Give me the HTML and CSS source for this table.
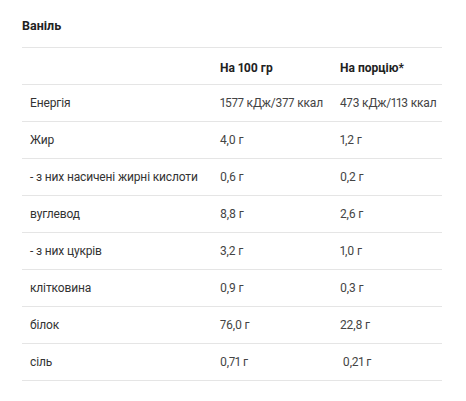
FILE: index.html
```html
<!DOCTYPE html>
<html lang="uk">
<head>
<meta charset="utf-8">
<link rel="stylesheet" href="styles.css">
</head>
<body>
<div class="panel">
  <h3 class="title">Ваніль</h3>
  <table class="nutri">
    <colgroup><col class="c1"><col class="c2"><col class="c3"></colgroup>
    <thead>
      <tr><th></th><th>На 100 гр</th><th>На порцію*</th></tr>
    </thead>
    <tbody>
      <tr><td>Енергія</td><td>1577 кДж/377 ккал</td><td>473 кДж/113 ккал</td></tr>
      <tr><td>Жир</td><td>4,0 г</td><td>1,2 г</td></tr>
      <tr><td>- з них насичені жирні кислоти</td><td>0,6 г</td><td>0,2 г</td></tr>
      <tr><td>вуглевод</td><td>8,8 г</td><td>2,6 г</td></tr>
      <tr><td>- з них цукрів</td><td>3,2 г</td><td>1,0 г</td></tr>
      <tr><td>клітковина</td><td>0,9 г</td><td>0,3 г</td></tr>
      <tr><td>білок</td><td>76,0 г</td><td>22,8 г</td></tr>
      <tr><td>сіль</td><td>0,71 г</td><td>&nbsp;0,21 г</td></tr>
    </tbody>
  </table>
</div>
</body>
</html>
```

FILE: styles.css
```css
html, body {
  margin: 0;
  padding: 0;
  background: #fff;
}
body {
  font-family: Roboto, "Noto Sans", sans-serif;
  color: #333;
}
.panel {
  padding: 0 24px 0 22px;
}
.title {
  margin: 0;
  height: 47px;
  line-height: 52px;
  font-size: 12.5px;
  font-weight: 700;
  color: #222;
  border-bottom: 1px solid #e5e5e5;
}
.nutri {
  width: 420px;
  border-collapse: collapse;
  table-layout: fixed;
  font-size: 12px;
  letter-spacing: -0.15px;
  font-variant-numeric: proportional-nums;
}
.c1 { width: 190px; }
.c2 { width: 120px; }
.c3 { width: 110px; }
.nutri th,
.nutri td {
  height: 36px;
  padding: 0 8px;
  text-align: left;
  white-space: nowrap;
  border-bottom: 1px solid #e5e5e5;
}
.nutri th {
  font-weight: 700;
  letter-spacing: 0;
  color: #222;
  padding-top: 3px;
  height: 33px;
}
.nutri td {
  color: #444;
}
.nutri td:first-child {
  color: #333;
}
```
